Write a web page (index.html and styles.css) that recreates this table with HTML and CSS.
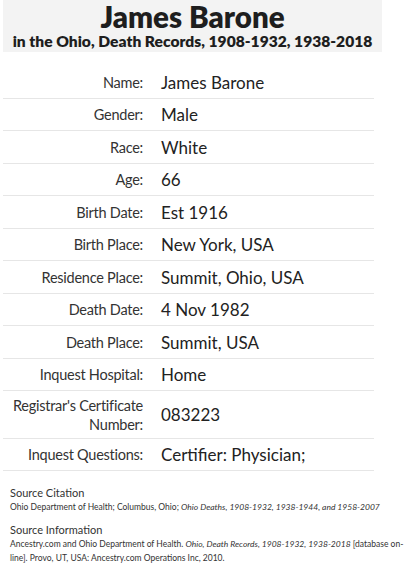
FILE: index.html
```html
<!DOCTYPE html>
<html>
<head>
<meta charset="utf-8">
<link rel="stylesheet" href="styles.css">
</head>
<body>
<div class="page">
  <div class="header">
    <h1 class="title">James Barone</h1>
    <div class="subtitle">in the Ohio, Death Records, 1908-1932, 1938-2018</div>
  </div>
  <div class="records">
    <div class="row"><div class="label">Name:</div><div class="value">James Barone</div></div>
    <div class="row"><div class="label">Gender:</div><div class="value">Male</div></div>
    <div class="row"><div class="label">Race:</div><div class="value">White</div></div>
    <div class="row"><div class="label">Age:</div><div class="value">66</div></div>
    <div class="row"><div class="label">Birth Date:</div><div class="value">Est 1916</div></div>
    <div class="row"><div class="label">Birth Place:</div><div class="value">New York, USA</div></div>
    <div class="row"><div class="label">Residence Place:</div><div class="value">Summit, Ohio, USA</div></div>
    <div class="row"><div class="label">Death Date:</div><div class="value">4 Nov 1982</div></div>
    <div class="row"><div class="label">Death Place:</div><div class="value">Summit, USA</div></div>
    <div class="row"><div class="label">Inquest Hospital:</div><div class="value">Home</div></div>
    <div class="row"><div class="label">Registrar's Certificate Number:</div><div class="value">083223</div></div>
    <div class="row"><div class="label">Inquest Questions:</div><div class="value">Certifier: Physician;</div></div>
  </div>
  <div class="source">
    <div class="source-title">Source Citation</div>
    <div class="source-text">Ohio Department of Health; Columbus, Ohio; <i>Ohio Deaths, 1908-1932, 1938-1944, and 1958-2007</i></div>
    <div class="source-title second">Source Information</div>
    <div class="source-text"><span>Ancestry.com and Ohio Department of Health. <i>Ohio, Death Records, 1908-1932, 1938-2018</i> [database on-</span></div>
    <div class="source-text"><span>line]. Provo, UT, USA: Ancestry.com Operations Inc, 2010.</span></div>
  </div>
</div>
</body>
</html>
```
FILE: styles.css
```css
html, body {
  margin: 0;
  padding: 0;
  background: #ffffff;
}
body {
  font-family: "Lato", "Liberation Sans", sans-serif;
  color: #222222;
}
.page {
  width: 410px;
  padding-left: 3px;
}
.header {
  width: 379px;
  height: 52px;
  background: #f3f3f3;
  text-align: center;
  box-sizing: border-box;
  padding-top: 1px;
}
.title {
  margin: 0;
  font-size: 29.5px;
  line-height: 31px;
  font-weight: 800;
  color: #1e1e1e;
}
.subtitle {
  font-size: 15.6px;
  line-height: 18px;
  font-weight: 800;
  color: #1e1e1e;
}
.records {
  width: 371px;
  margin-top: 14px;
}
.row {
  display: grid;
  grid-template-columns: 140px 1fr;
  column-gap: 18px;
  align-items: center;
  padding: 4.5px 0 4px;
  border-bottom: 1px solid #e6e6e6;
  min-height: 23px;
}
.label {
  text-align: right;
  font-size: 14.5px;
  letter-spacing: -0.25px;
  line-height: 19px;
  color: #333333;
}
.value {
  font-size: 17px;
  line-height: 23px;
  color: #222222;
}
.source {
  padding: 15px 0 0 7px;
  width: 400px;
}
.source-title {
  font-size: 11px;
  line-height: 14px;
  color: #333333;
}
.source-title.second {
  margin-top: 9px;
}
.source-text {
  font-size: 8.5px;
  line-height: 14px;
  color: #333333;
  white-space: nowrap;
}
```
